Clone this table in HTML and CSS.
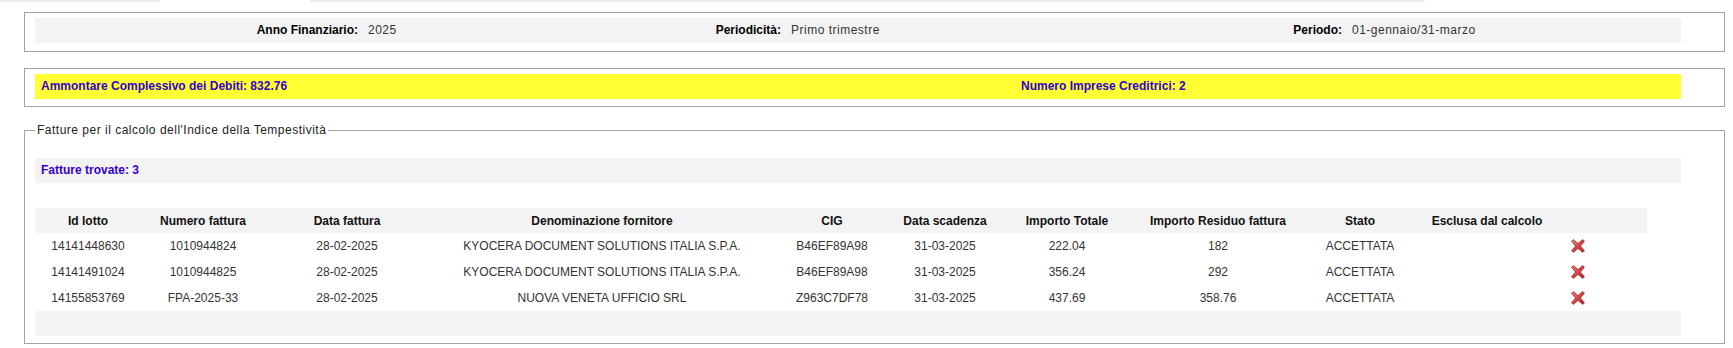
FILE: index.html
```html
<!DOCTYPE html>
<html lang="it">
<head>
<meta charset="utf-8">
<title>Indice della Tempestività</title>
<link rel="stylesheet" href="styles.css">
</head>
<body>
<div class="tabstrip"><span class="seg seg-a"></span><span class="seg-gap"></span><span class="seg seg-b"></span></div>
<main class="page">
  <section class="box">
    <div class="info-bar">
      <span class="lbl">Anno Finanziario:</span><span class="val">2025</span>
      <span class="lbl">Periodicità:</span><span class="val">Primo trimestre</span>
      <span class="lbl">Periodo:</span><span class="val">01-gennaio/31-marzo</span>
    </div>
  </section>
  <section class="box box-sum">
    <div class="sum-bar">
      <span>Ammontare Complessivo dei Debiti: 832.76</span>
      <span>Numero Imprese Creditrici: 2</span>
    </div>
  </section>
  <fieldset class="invoices">
    <legend>Fatture per il calcolo dell'Indice della Tempestività</legend>
    <div class="found">Fatture trovate: 3</div>
    <table class="grid">
      <colgroup>
        <col class="w106"><col class="w124"><col class="w164"><col class="w346"><col class="w114"><col class="w112"><col class="w132"><col class="w170"><col class="w114"><col class="w140"><col class="w90">
      </colgroup>
      <thead>
        <tr><th>Id lotto</th><th>Numero fattura</th><th>Data fattura</th><th>Denominazione fornitore</th><th>CIG</th><th>Data scadenza</th><th>Importo Totale</th><th>Importo Residuo fattura</th><th>Stato</th><th>Esclusa dal calcolo</th><th></th></tr>
      </thead>
      <tbody>
        <tr><td>14141448630</td><td>1010944824</td><td>28-02-2025</td><td>KYOCERA DOCUMENT SOLUTIONS ITALIA S.P.A.</td><td>B46EF89A98</td><td>31-03-2025</td><td>222.04</td><td>182</td><td>ACCETTATA</td><td></td><td class="act"><svg class="xicon" width="16" height="16" viewBox="0 0 16 16"><defs><linearGradient id="gx1" x1="0" y1="0" x2="1" y2="1"><stop offset="0" stop-color="#f08a8a"/><stop offset="0.5" stop-color="#d64545"/><stop offset="1" stop-color="#b52a2a"/></linearGradient></defs><path d="M3.2 1.6 L8 5.6 L12.8 1.6 L14.4 3.2 L10.4 8 L14.4 12.8 L12.8 14.4 L8 10.4 L3.2 14.4 L1.6 12.8 L5.6 8 L1.6 3.2 Z" fill="url(#gx1)" stroke="#a63232" stroke-width="0.9" stroke-linejoin="round"/></svg></td></tr>
        <tr><td>14141491024</td><td>1010944825</td><td>28-02-2025</td><td>KYOCERA DOCUMENT SOLUTIONS ITALIA S.P.A.</td><td>B46EF89A98</td><td>31-03-2025</td><td>356.24</td><td>292</td><td>ACCETTATA</td><td></td><td class="act"><svg class="xicon" width="16" height="16" viewBox="0 0 16 16"><defs><linearGradient id="gx2" x1="0" y1="0" x2="1" y2="1"><stop offset="0" stop-color="#f08a8a"/><stop offset="0.5" stop-color="#d64545"/><stop offset="1" stop-color="#b52a2a"/></linearGradient></defs><path d="M3.2 1.6 L8 5.6 L12.8 1.6 L14.4 3.2 L10.4 8 L14.4 12.8 L12.8 14.4 L8 10.4 L3.2 14.4 L1.6 12.8 L5.6 8 L1.6 3.2 Z" fill="url(#gx2)" stroke="#a63232" stroke-width="0.9" stroke-linejoin="round"/></svg></td></tr>
        <tr><td>14155853769</td><td>FPA-2025-33</td><td>28-02-2025</td><td>NUOVA VENETA UFFICIO SRL</td><td>Z963C7DF78</td><td>31-03-2025</td><td>437.69</td><td>358.76</td><td>ACCETTATA</td><td></td><td class="act"><svg class="xicon" width="16" height="16" viewBox="0 0 16 16"><defs><linearGradient id="gx3" x1="0" y1="0" x2="1" y2="1"><stop offset="0" stop-color="#f08a8a"/><stop offset="0.5" stop-color="#d64545"/><stop offset="1" stop-color="#b52a2a"/></linearGradient></defs><path d="M3.2 1.6 L8 5.6 L12.8 1.6 L14.4 3.2 L10.4 8 L14.4 12.8 L12.8 14.4 L8 10.4 L3.2 14.4 L1.6 12.8 L5.6 8 L1.6 3.2 Z" fill="url(#gx3)" stroke="#a63232" stroke-width="0.9" stroke-linejoin="round"/></svg></td></tr>
      </tbody>
    </table>
    <div class="foot-bar"></div>
  </fieldset>
</main>
</body>
</html>
```
FILE: styles.css
```css
* { box-sizing: border-box; }
html, body { margin: 0; padding: 0; background: #fff; }
body {
  font-family: "Liberation Sans", Arial, sans-serif;
  font-size: 12px;
  color: #2b2b2b;
  width: 1733px;
  height: 348px;
  overflow: hidden;
}
.tabstrip { display: flex; height: 2px; }
.seg { display: block; height: 2px; background: #ececec; }
.seg-a { width: 160px; }
.seg-gap { width: 150px; }
.seg-b { width: 1115px; }

.page { padding: 0 8px 0 24px; }

.box {
  margin-top: 10px;
  border: 1px solid #a3a3a3;
  padding: 5px 43px 8px 10px;
}
.box-sum { margin-top: 16px; padding-bottom: 7px; }

.info-bar {
  display: grid;
  grid-template-columns: 328px 237px 186px 364px 197px 1fr;
  height: 25px;
  line-height: 25px;
  background: #f3f3f3;
}
.info-bar .lbl { text-align: right; font-weight: bold; color: #000; padding-right: 5px; }
.info-bar .val { text-align: left; padding-left: 5px; color: #333; letter-spacing: 0.5px; }

.sum-bar {
  display: grid;
  grid-template-columns: 980px 1fr;
  height: 25px;
  line-height: 25px;
  background: #ffff33;
  color: #3300cc;
  font-weight: bold;
}
.sum-bar span { padding-left: 6px; }

.invoices {
  margin: 16px 0 0 0;
  min-inline-size: 0;
  border: 1px solid #a3a3a3;
  padding: 21px 43px 7px 10px;
}
.invoices legend {
  padding: 0 2px;
  line-height: 14px;
  color: #222;
  letter-spacing: 0.5px;
}
.found {
  height: 25px;
  line-height: 25px;
  background: #f3f3f3;
  color: #3300cc;
  font-weight: bold;
  padding-left: 6px;
}
.grid {
  margin-top: 25px;
  width: 1612px;
  table-layout: fixed;
  border-collapse: collapse;
  border-spacing: 0;
}
.w106 { width: 106px; } .w124 { width: 124px; } .w164 { width: 164px; } .w346 { width: 346px; }
.w114 { width: 114px; } .w112 { width: 112px; } .w132 { width: 132px; } .w170 { width: 170px; }
.w140 { width: 140px; } .w90 { width: 90px; }
.grid thead tr { background: #f3f3f3; }
.grid th {
  height: 25px;
  padding: 0;
  font-weight: bold;
  color: #111;
  text-align: center;
  white-space: nowrap;
}
.grid td {
  height: 26px;
  padding: 0;
  text-align: center;
  color: #333;
  white-space: nowrap;
}
.grid td.act { text-align: left; padding-left: 13px; }
.xicon { display: block; }
.foot-bar { height: 25px; background: #f3f3f3; }
```
